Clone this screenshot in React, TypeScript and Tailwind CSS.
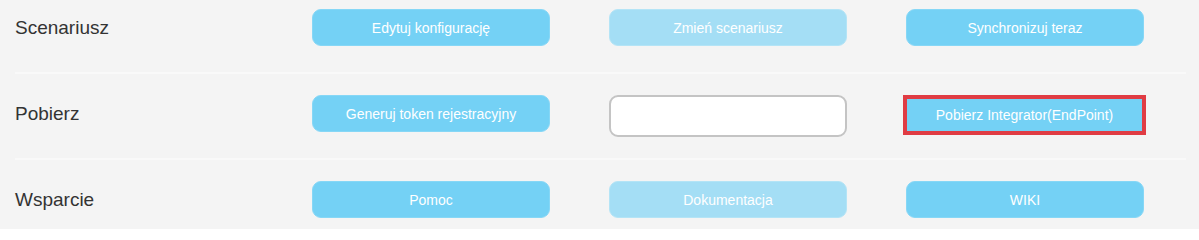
// Panel ustawień integracji: wiersze z etykietą i trzema akcjami

const font = { fontFamily: '"Liberation Sans", Arial, sans-serif' }

function ActionButton({ label, disabled = false }: { label: string; disabled?: boolean }) {
    return (
        <button
            disabled={disabled}
            className={
                disabled
                    ? 'w-[238px] h-[37px] pt-[2px] rounded-[9px] bg-[#a4def5] border border-[#b4e4f6] text-white text-[14px]'
                    : 'w-[238px] h-[37px] pt-[2px] rounded-[9px] bg-[#74d1f5] border border-[#86d7f6] text-white text-[14px]'
            }
        >
            {label}
        </button>
    )
}

function Row({ label, children, last = false }: { label: string; children: React.ReactNode; last?: boolean }) {
    return (
        <div
            className={
                last
                    ? 'flex items-start h-[86px] pt-[21px] ml-[15px] mr-[13px]'
                    : 'flex items-start h-[86px] pt-[21px] ml-[15px] mr-[13px] border-b-2 border-[#f9f9f9]'
            }
        >
            <div className="w-[297px] h-[37px] pt-[2px] flex items-center text-[19px] text-[#333333]">{label}</div>
            <div className="flex items-start gap-[59px]">{children}</div>
        </div>
    )
}

export default function App() {
    return (
        <div className="w-[1199px] h-[229px] overflow-hidden bg-[#f4f4f4]" style={font}>
            <div className="-mt-[12px]">
                <Row label="Scenariusz">
                    <ActionButton label="Edytuj konfigurację" />
                    <ActionButton label="Zmień scenariusz" disabled />
                    <ActionButton label="Synchronizuj teraz" />
                </Row>
                <Row label="Pobierz">
                    <ActionButton label="Generuj token rejestracyjny" />
                    <input
                        type="text"
                        className="w-[238px] h-[42px] rounded-[9px] bg-white border-2 border-[#c4c4c4] outline-none px-2"
                    />
                    <button className="w-[235px] h-[32px] mt-[4px] ml-[1px] bg-[#74d1f5] text-white text-[14px] outline-4 outline-[#e03c44]">
                        Pobierz Integrator(EndPoint)
                    </button>
                </Row>
                <Row label="Wsparcie" last>
                    <ActionButton label="Pomoc" />
                    <ActionButton label="Dokumentacja" disabled />
                    <ActionButton label="WIKI" />
                </Row>
            </div>
        </div>
    )
}
